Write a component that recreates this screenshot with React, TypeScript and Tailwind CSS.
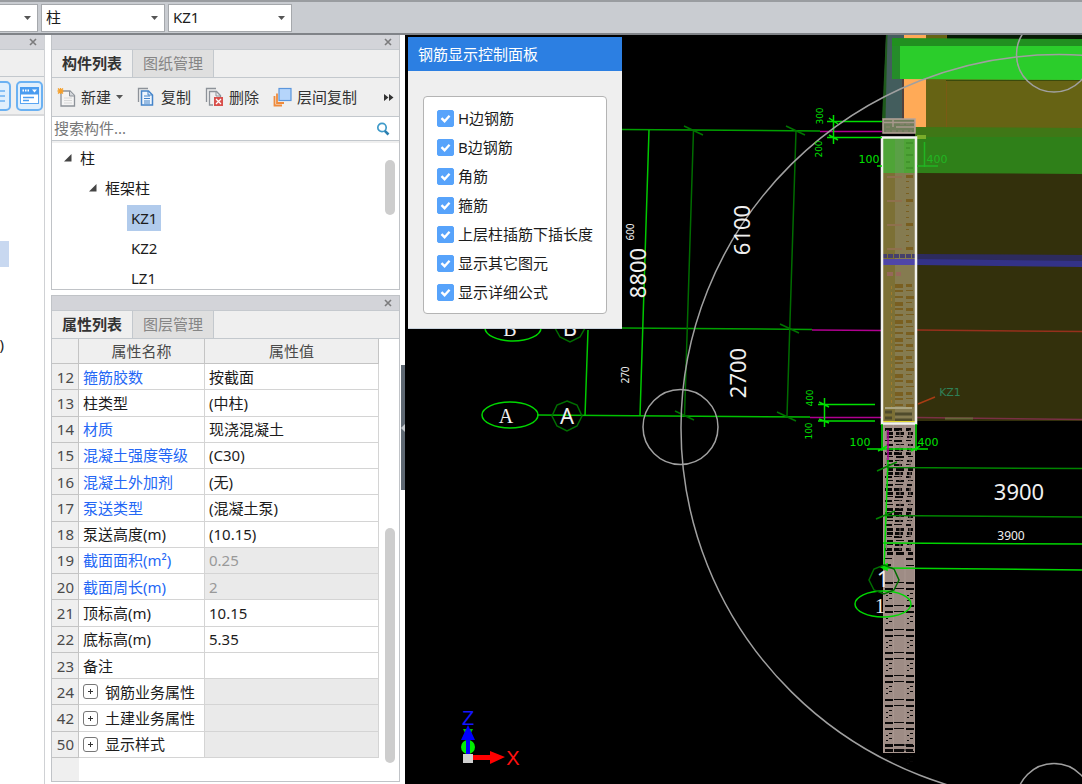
// src/App.tsx
import React, { useState } from "react";

type Property = {
  id: number;
  name: string;
  value?: string;
  link?: boolean;
  locked?: boolean;
  group?: boolean;
};

const properties: Property[] = [
  { id: 12, name: "箍筋胶数", value: "按截面", link: true },
  { id: 13, name: "柱类型", value: "(中柱)" },
  { id: 14, name: "材质", value: "现浇混凝土", link: true },
  { id: 15, name: "混凝土强度等级", value: "(C30)", link: true },
  { id: 16, name: "混凝土外加剂", value: "(无)", link: true },
  { id: 17, name: "泵送类型", value: "(混凝土泵)", link: true },
  { id: 18, name: "泵送高度(m)", value: "(10.15)" },
  { id: 19, name: "截面面积(m²)", value: "0.25", link: true, locked: true },
  { id: 20, name: "截面周长(m)", value: "2", link: true, locked: true },
  { id: 21, name: "顶标高(m)", value: "10.15" },
  { id: 22, name: "底标高(m)", value: "5.35" },
  { id: 23, name: "备注" },
  { id: 24, name: "钢筋业务属性", group: true, locked: true },
  { id: 42, name: "土建业务属性", group: true, locked: true },
  { id: 50, name: "显示样式", group: true, locked: true },
];

const displayOptions = [
  "H边钢筋",
  "B边钢筋",
  "角筋",
  "箍筋",
  "上层柱插筋下插长度",
  "显示其它图元",
  "显示详细公式",
];

const Caret: React.FC = () => (
  <svg width="7" height="4" viewBox="0 0 7 4" className="pointer-events-none shrink-0">
    <path d="M0 0h7L3.500 4z" fill="#555" />
  </svg>
);

const Combo: React.FC<{ label: string; options: string[]; className: string }> = ({
  label,
  options,
  className,
}) => (
  <div className={`grid h-[28px] items-center border border-[#a5a8ac] bg-white ${className}`}>
    <select
      aria-label={label}
      className="col-start-1 row-start-1 h-full w-full appearance-none bg-transparent pl-1 text-[15px] text-[#1c1c1c] outline-none"
    >
      {options.map((o) => (
        <option key={o}>{o}</option>
      ))}
    </select>
    <span className="pointer-events-none col-start-1 row-start-1 justify-self-end pr-[6px]">
      <Caret />
    </span>
  </div>
);

const TitleBar: React.FC = () => (
  <div className="flex h-[15px] shrink-0 items-center justify-end border-b border-[#c5c9ce] bg-[#d3d4d9] pr-[7px]">
    <button aria-label="关闭" className="block">
      <svg width="8" height="8" viewBox="0 0 8 8" className="block">
        <path d="M1 1l6 6M7 1L1 7" stroke="#7b7b7d" strokeWidth="1.600" />
      </svg>
    </button>
  </div>
);

const TabBar: React.FC<{ tabs: string[] }> = ({ tabs }) => (
  <div role="tablist" className="flex h-[28px] shrink-0 border-b border-[#c3c8cd] bg-[#efefef]">
    {tabs.map((tab, i) => (
      <button
        key={tab}
        role="tab"
        aria-selected={i === 0}
        className={
          i === 0
            ? "w-[81px] border-r border-[#c3c8cd] text-[15px] font-bold text-[#333]"
            : "w-[81px] border-r border-[#c3c8cd] bg-[#dfdfdf] text-[15px] text-[#858585]"
        }
      >
        {tab}
      </button>
    ))}
  </div>
);

const NewIcon: React.FC = () => (
  <svg width="19" height="20" viewBox="0 0 19 20">
    <path d="M4 4h9l4.500 4.500V19H4z" fill="#f4f4f4" stroke="#8d9299" strokeWidth="1.300" />
    <path d="M12.500 4v5h5" fill="#d5d8dc" stroke="#8d9299" />
    <path d="M7 11h8M7 13.500h8M7 16h8" stroke="#d8d8d8" />
    <path d="M3.500 1v6M.5 4h6M1 1.500l5 5M6 1.500l-5 5" stroke="#f5a02c" strokeWidth="1.300" />
  </svg>
);

const CopyIcon: React.FC = () => (
  <svg width="19" height="20" viewBox="0 0 19 20" fill="none">
    <path d="M1.500 15V1.500H11" stroke="#8d9299" strokeWidth="1.300" />
    <path d="M4.500 4h7l4 4v10h-11z" fill="#eef5fd" stroke="#4484c9" strokeWidth="1.500" />
    <path d="M7 9h6M7 11.500h6M7 14h6M7 16h6M11 4v4h4" stroke="#4484c9" />
  </svg>
);

const DeleteIcon: React.FC = () => (
  <svg width="19" height="20" viewBox="0 0 19 20" fill="none">
    <path d="M1.500 15V1.500H11" stroke="#8d9299" strokeWidth="1.300" />
    <path d="M8 18H4.500V4.500h7l4 4V10" stroke="#8d9299" strokeWidth="1.300" />
    <path d="M11 4.500V9h4.500" stroke="#8d9299" />
    <rect x="9" y="10" width="9" height="9" fill="#d8504c" />
    <path d="M11 12l5 5M16 12l-5 5" stroke="#fff" strokeWidth="1.300" />
  </svg>
);

const LayerIcon: React.FC = () => (
  <svg width="19" height="20" viewBox="0 0 19 20" fill="none">
    <path d="M1.500 9v9.500H9M4 6.500V16h7" stroke="#ef8b3c" strokeWidth="1.800" />
    <rect x="6" y="1.500" width="12" height="12" fill="#b5d5fb" stroke="#5b96dc" strokeWidth="1.200" />
  </svg>
);

const ToolButton: React.FC<{ icon: React.ReactNode; text: string; menu?: boolean }> = ({
  icon,
  text,
  menu,
}) => (
  <button className="flex items-center gap-[5px] text-[15px] text-[#333]">
    {icon}
    {text}
    {menu && <Caret />}
  </button>
);

const TreeArrow: React.FC = () => (
  <svg width="8" height="8" viewBox="0 0 8 8" className="shrink-0">
    <path d="M7.500 0v7.500H0z" fill="#444" />
  </svg>
);

const NavigatorPane: React.FC = () => (
  <aside className="flex w-[45px] shrink-0 flex-col overflow-hidden border-r border-[#cfd1d4] bg-white">
    <TitleBar />
    <div className="h-[27px] shrink-0 border-b border-[#c3c8cd] bg-[#efefef]" />
    <div className="flex h-[39px] shrink-0 items-center justify-end gap-[5px] border-b-2 border-[#d9dadc] bg-[#efefef] pr-px">
      <button
        aria-label="列表"
        className="flex h-[30px] w-[27px] shrink-0 items-center justify-end rounded-[5px] border-2 border-[#6bb1f2] bg-[#e1effc] pr-1"
      >
        <svg width="14" height="14" viewBox="0 0 14 14">
          <path d="M0 2h14M0 7h14M0 12h14" stroke="#6bb1f2" strokeWidth="1.500" />
        </svg>
      </button>
      <button
        aria-label="详情"
        className="flex h-[30px] w-[27px] shrink-0 items-center justify-center rounded-[5px] border-2 border-[#6bb1f2] bg-[#e1effc]"
      >
        <svg width="19" height="17" viewBox="0 0 19 17">
          <rect x=".5" y=".5" width="18" height="16" fill="#fff" stroke="#5aa5f2" />
          <path d="M0 0h19v7.500H0z" fill="#4a9cf0" />
          <path d="M3 10.500h11M3 13.500h6" stroke="#4a9cf0" strokeWidth="1.500" />
          <path d="M2.500 3.500H4M5 3.500h1.500M7.500 3.500H9" stroke="#fff" strokeWidth="2" />
          <path d="M12 2.500h5l-2.500 3z" fill="#fff" />
        </svg>
      </button>
    </div>
    <div className="flex grow flex-col pt-[125px] text-[15px] text-[#1c1c1c]">
      <div className="h-[26px] w-[9px] bg-[#c8d8f0]" />
      <div className="flex w-1 justify-end pt-[66px]">)</div>
    </div>
  </aside>
);

const ComponentPanel: React.FC = () => (
  <section className="flex h-[255px] shrink-0 flex-col border-x border-b border-[#c0c3c7] bg-white">
    <TitleBar />
    <TabBar tabs={["构件列表", "图纸管理"]} />
    <div className="flex h-[39px] shrink-0 items-center gap-[14px] border-b border-[#c3c8cd] bg-[#efefef] px-[5px]">
      <ToolButton icon={<NewIcon />} text="新建" menu />
      <ToolButton icon={<CopyIcon />} text="复制" />
      <ToolButton icon={<DeleteIcon />} text="删除" />
      <ToolButton icon={<LayerIcon />} text="层间复制" />
      <button aria-label="更多" className="ml-auto">
        <svg width="10" height="7" viewBox="0 0 10 7">
          <path d="M0 0l4.500 3.500L0 7zM5 0l4.500 3.500L5 7z" fill="#333" />
        </svg>
      </button>
    </div>
    <div className="flex h-[24px] shrink-0 items-center border-b border-[#c3c8cd] pr-[9px]">
      <input
        type="text"
        aria-label="搜索构件"
        placeholder="搜索构件..."
        className="min-w-0 flex-1 pl-[2px] text-[15px] outline-none placeholder:text-[#777]"
      />
      <svg width="14" height="14" viewBox="0 0 14 14" fill="none">
        <circle cx="6" cy="5.500" r="4.200" stroke="#3f9ac9" strokeWidth="1.700" />
        <path d="M8.800 8.800l3.700 3.700" stroke="#2c7fb0" strokeWidth="2.600" />
      </svg>
    </div>
    <div className="flex min-h-0 grow border-t-2 border-[#efefef]">
      <ul role="tree" className="grow overflow-hidden text-[15px] text-[#1c1c1c]">
        <li role="treeitem" className="flex h-[30px] items-center gap-2 pl-3">
          <TreeArrow />
          柱
        </li>
        <li role="treeitem" className="flex h-[30px] items-center gap-2 pl-[37px]">
          <TreeArrow />
          框架柱
        </li>
        <li role="treeitem" aria-selected="true" className="flex h-[30px] items-center pl-[75px]">
          <span className="h-[26px] bg-[#b1cbec] px-1 leading-[26px]">KZ1</span>
        </li>
        <li role="treeitem" className="flex h-[30px] items-center pl-[79px]">
          KZ2
        </li>
        <li role="treeitem" className="flex h-[30px] items-center pl-[79px]">
          LZ1
        </li>
      </ul>
      <div className="shrink-0 pr-1 pt-[17px]">
        <div className="h-[55px] w-[10px] rounded-full bg-[#cdcdcd]" />
      </div>
    </div>
  </section>
);

const PropertyPanel: React.FC = () => (
  <section className="flex grow flex-col border border-[#c0c3c7] bg-white">
    <TitleBar />
    <TabBar tabs={["属性列表", "图层管理"]} />
    <div className="flex grow justify-between">
      <div className="flex flex-col">
        <table className="h-[419px] w-[327px] table-fixed border-separate border-spacing-0 text-[15px]">
          <thead>
            <tr className="bg-[#efefef] text-[#4a4a4a]">
              <th className="w-[27px] border-b border-r border-[#c4c4c4]" />
              <th className="w-[126px] border-b border-r border-[#c4c4c4] font-normal leading-6">属性名称</th>
              <th className="border-b border-r border-[#c4c4c4] font-normal leading-6">属性值</th>
            </tr>
          </thead>
          <tbody>
            {properties.map((p) => (
              <tr key={p.id}>
                <td className="border-b border-r border-[#c4c4c4] bg-[#efefef] pr-1 text-right leading-6 text-[#4a4a4a]">
                  {p.id}
                </td>
                <td className="border-b border-r border-[#d4d4d4] pl-1 leading-6">
                  <div className={p.link ? "flex items-center text-[#2467f5]" : "flex items-center text-[#1c1c1c]"}>
                    {p.group && (
                      <button
                        aria-label={`展开${p.name}`}
                        className="mr-[7px] flex h-[15px] w-[15px] shrink-0 items-center justify-center rounded-[3px] border border-[#777] bg-white"
                      >
                        <svg width="5" height="5" viewBox="0 0 5 5">
                          <path d="M0 2.500h5M2.500 0v5" stroke="#333" />
                        </svg>
                      </button>
                    )}
                    {p.name}
                  </div>
                </td>
                <td
                  className={
                    p.locked
                      ? "border-b border-r border-[#d4d4d4] bg-[#eaeaea] pl-1 leading-6 text-[#999]"
                      : "border-b border-r border-[#d4d4d4] pl-1 leading-6 text-[#1c1c1c]"
                  }
                >
                  {p.value}
                </td>
              </tr>
            ))}
          </tbody>
        </table>
        <div className="w-[27px] grow bg-[#efefef]" />
      </div>
      <div className="shrink-0 pr-1 pt-[189px]">
        <div className="h-[235px] w-[10px] rounded-full bg-[#cdcdcd]" />
      </div>
    </div>
  </section>
);

const RebarDialog: React.FC = () => {
  const [checked, setChecked] = useState<boolean[]>(displayOptions.map(() => true));

  const toggle = (index: number) => {
    setChecked(checked.map((c, i) => (i === index ? !c : c)));
  };

  return (
    <div role="dialog" aria-labelledby="rebar-title" className="absolute left-[3px] top-[2px] w-[214px] border-b border-[#c9d3dc] bg-[#efefef]">
      <h2 id="rebar-title" className="h-[34px] bg-[#2c7fe2] pl-[10px] text-[15px] leading-[34px] text-white">
        钢筋显示控制面板
      </h2>
      <div className="px-[15px] pb-[14px] pt-[25px]">
        <div className="flex flex-col gap-[5px] rounded-[4px] border border-[#b4b4b4] bg-white px-[13px] py-[9px]">
          {displayOptions.map((name, i) => (
            <label key={name} className="flex h-6 items-center gap-1 whitespace-nowrap text-[15px] text-[#1c1c1c]">
              <span className="grid place-items-center">
                <input
                  type="checkbox"
                  checked={checked[i]}
                  onChange={() => toggle(i)}
                  className="col-start-1 row-start-1 h-[17px] w-[17px] appearance-none rounded-[2px] border border-[#57a3fb] bg-white checked:bg-[#57a3fb]"
                />
                <svg width="11" height="9" viewBox="0 0 12 10" className="pointer-events-none col-start-1 row-start-1">
                  <path d="M1.500 4.500L5 8l5.500-6" fill="none" stroke="#fff" strokeWidth="2.600" />
                </svg>
              </span>
              {name}
            </label>
          ))}
        </div>
      </div>
    </div>
  );
};

// x, width of the three rebar cages inside the column
const cages = [
  [885, 8],
  [894, 10],
  [906, 8],
];

const denseRows = Array.from({ length: 32 }, (_, i) => 428 + i * 4);
const tieRows = Array.from({ length: 8 }, (_, i) => Math.round(582 + i * 23.3));
const brownRows = Array.from({ length: 21 }, (_, i) => 284 + i * 6);

const LowerColumn: React.FC = () => (
  <g>
    <rect x="883" y="424" width="32" height="329" fill="#9e8c85" />
    <g fill="#0a0808">
      {denseRows.map((y, i) =>
        cages.map(([x, w], k) => (
          <rect
            key={`${y}-${x}`}
            x={x + ((i * 5 + k * 3) % 3)}
            y={y}
            width={w - 1 - ((i * 3 + k) % 3)}
            height={i % 5 < 2 ? 3 : (i + k) % 2 === 0 ? 2 : 1}
          />
        ))
      )}
      {tieRows.map((y) =>
        cages.map(([x, w], k) => (
          <g key={`${y}-${x}`}>
            <rect x={x} y={y} width={w} height={k === 1 ? 1 : 2} />
            <rect x={x} y={y + 6} width={w} height={k === 1 ? 1 : 2} />
            {k !== 1 && (
              <>
                <rect x={x + 4} y={y + 11} width="3" height="1" />
                <rect x={x + 1} y={y + 13} width="2" height="1" />
                <rect x={x + 4} y={y + 16} width="3" height="1" />
                <rect x={x + 1} y={y + 18} width="2" height="1" />
              </>
            )}
          </g>
        ))
      )}
      <rect x="885" y="558" width="7" height="1" />
      <rect x="906" y="558" width="7" height="2" />
      <rect x="885" y="564" width="6" height="2" />
      <rect x="906" y="565" width="8" height="1" />
      <rect x="885" y="744" width="28" height="2" />
      <rect x="885" y="749" width="28" height="2" />
    </g>
    <path d="M883.500 424v329M893.500 424v329M905 424v329M914.500 424v329M883 752.500h32" stroke="#a8968f" />
    <path d="M886.500 430v120M900 430v120M910 430v120" stroke="#8a7973" strokeDasharray="9 5" />
  </g>
);

const UpperColumn: React.FC = () => (
  <g>
    <rect x="882" y="137" width="35" height="287" fill="#7c7035" />
    <rect x="895" y="173" width="20" height="250" fill="#857b50" />
    <rect x="882" y="137" width="35" height="36" fill="#4fa437" />
    <rect x="895" y="137" width="9" height="36" fill="#5aa046" />
    <g fill="#7a5f20">
      {brownRows.map((y, i) => (
        <g key={y}>
          <rect x="895" y={y} width="8" height={i % 3 === 0 ? 4 : 2} />
          <rect x="906" y={y} width={6 + (i % 3)} height={i % 2 === 0 ? 3 : 1} />
          <rect x="891" y={y + 2} width="1" height="3" fill="#a07a2c" />
        </g>
      ))}
      {Array.from({ length: 13 }, (_, i) => (
        <g key={i}>
          <rect x="906" y={175 + i * 6} width={i % 4 === 0 ? 7 : 3} height={i % 4 === 0 ? 3 : 1} />
          {i % 4 === 0 && <rect x="887" y={176 + i * 6} width="15" height="2" fill="#8f704e" />}
        </g>
      ))}
    </g>
    <path d="M906 143h7M906 148h4M906 155h7M906 162h4M906 168h7" stroke="#3f8f2a" strokeWidth="1.500" />
    <path d="M882 256h33" stroke="#45406b" strokeWidth="4" strokeDasharray="5 1" />
    <rect x="882" y="259" width="35" height="6" fill="#4f46a8" />
    <path d="M887 274h6M896 274h5" stroke="#96685a" strokeWidth="4" />
    <rect x="885" y="407" width="27" height="2" fill="#aaa582" />
    <path d="M885 412h7M895 414h17M885 418h7M895 420h17" stroke="#4f4b2c" strokeWidth="3" />
    <path d="M882 421.500h35" stroke="#e4d92c" />
    <rect x="882" y="137.500" width="34" height="286" stroke="#f2f2ee" strokeWidth="2.500" />
    <path d="M883 119h32v14h-32z" fill="#6f7d5b" stroke="#b8a49a" strokeWidth="1.500" />
    <path d="M883 122.500h32M896 127h18M893 119v8" stroke="#a8988c" strokeWidth="1.500" />
    <path d="M886 127h6M900 124h12M886 131h26" stroke="#8f8272" strokeDasharray="4 2" />
  </g>
);

const Viewport: React.FC = () => (
  <svg
    viewBox="405 35 677 749"
    preserveAspectRatio="xMinYMin slice"
    className="block h-full w-full font-['Noto_Sans','Noto_Sans_CJK_SC',sans-serif]"
    fill="none"
  >
    {/* floor slabs and beams */}
    <rect x="925" y="35" width="157" height="95" fill="#666314" />
    <rect x="946" y="35" width="136" height="4" fill="#071a05" />
    <rect x="917" y="173" width="165" height="248" fill="#33300c" />
    <path d="M886 35h18v84h-21z" fill="#435d5d" />
    <path d="M886 35h1.500l-2 84H882z" fill="#1f5a1c" />
    <path d="M902 78h2v50h-2z" fill="#52403c" />
    <rect x="904" y="35" width="22" height="94" fill="#ffaa57" />
    <path d="M946.500 35v93" stroke="#7a5a14" />
    <path d="M892 38l190 1v8H892z" fill="#219020" />
    <path d="M892 46h10v33h-10z" fill="#258c2a" />
    <path d="M900 46h182v34l-182-1z" fill="#2bcd2b" />
    <path d="M946 80h136v1h-136z" fill="#3a4a0c" />
    <path d="M915 127l167 1v10H915z" fill="#3f7716" />
    <path d="M915 137h167v37l-165-1z" fill="#2f8019" />
    <rect x="917" y="135" width="9" height="4" fill="#7aac2a" />
    <path d="M917 254l165 1v6H917z" fill="#2d2b5e" />
    <path d="M917 259l165 2v6l-165-2z" fill="#333288" />

    {/* axis grid */}
    <g stroke="#00a000" strokeWidth="1.500">
      <path d="M622 129.500L820 131M622 328L812 329.500" />
      <path d="M537 415L810 417" stroke="#00c000" />
      <path d="M649 130L640 416M588 330L585 416" stroke="#00c800" />
      <path d="M693.500 130L684.500 416M796 131L787 416" stroke="#006c00" />
      <path d="M684 126l19 9M786 126l19 9M780 324l19 9M675 411l19 9M777 412l19 9" stroke="#007400" />
    </g>
    <path d="M820 131.500H882M812 330L882 330.500M810 417.500H882" stroke="#b00090" strokeWidth="1.500" />
    <path d="M917 330L1082 331.500" stroke="#96301c" strokeWidth="1.500" />
    <path d="M917 417.500L1082 419.500" stroke="#7a3045" strokeWidth="1.500" />
    <path d="M945 418.500h28" stroke="#66663a" strokeWidth="2" />

    <LowerColumn />
    <UpperColumn />

    {/* offsets beside the column */}
    <g stroke="#00e000" strokeWidth="1.500">
      <path d="M827 121.500h55M827 137.500h55M833.500 115v29M829 118l9 6M829 135l9 5" />
      <path d="M818 404.500h57M818 421h57M824.500 398v29M819 402l10 5M819 419l10 4" />
      <path d="M867 449h61M882 424v27M916 424v27M878 451l9-5M911 451l9-5" />
      <path d="M888 460L884 570M877 166h5" />
      <path d="M917 166h21M924.500 142v25" stroke="#22b422" />
      <path d="M883 543L1082 544M883 568L1082 570" stroke="#00d400" />
      <path d="M887 467.500L1082 468.500M885 515.500L1082 517M877 471l20-9M876 519l19-8" stroke="#008400" />
      <path d="M881 567l6-3v6z" fill="#00e000" />
    </g>
    <path d="M888 430v30" stroke="#b5009a" strokeWidth="1.500" />
    <path d="M918 404l17-7" stroke="#a83c14" strokeWidth="1.500" />

    {/* axis bubbles */}
    <g stroke="#00d800" strokeWidth="1.500">
      <ellipse cx="513" cy="328" rx="28" ry="13" />
      <ellipse cx="510" cy="415" rx="28" ry="13" />
      <ellipse cx="883" cy="604" rx="28" ry="13" />
      <path
        d="M567 401l10 4 5 11-5 10-10 5-10-5-5-10 5-11zM570 313l10 4 5 11-5 9-10 5-10-5-5-9 5-11zM884 565l10 4 5 11-5 10-10 4-10-4-5-10 5-11z"
        stroke="#006e00"
      />
    </g>

    <g stroke="#a0a0a0" strokeWidth="1.500">
      <ellipse cx="1059" cy="428" rx="378" ry="373.500" />
      <circle cx="680.500" cy="427" r="37.500" />
      <circle cx="1054" cy="54.500" r="37.500" />
      <circle cx="1054" cy="801" r="37.500" />
    </g>

    <g fill="#f0f0f0" textAnchor="middle" fontSize="22">
      <text transform="translate(750 230) rotate(-90)">6100</text>
      <text transform="translate(646 273) rotate(-90)">8800</text>
      <text transform="translate(746 373) rotate(-90)">2700</text>
      <text x="1019" y="500">3900</text>
      <text x="1011" y="540" fontSize="12">3900</text>
      <text x="567" y="424">A</text>
      <text x="570" y="336">B</text>
      <text x="883" y="587">1</text>
      <g className="font-['Liberation_Serif',serif]" fontSize="20">
        <text x="506" y="423">A</text>
        <text x="510" y="336">B</text>
        <text x="880" y="613">1</text>
      </g>
      <g fontSize="10">
        <text transform="translate(634 232) rotate(-90)">600</text>
        <text transform="translate(629 375) rotate(-90)">270</text>
      </g>
    </g>
    <g fill="#00e000" textAnchor="middle" fontSize="11" className="font-['DejaVu_Sans',sans-serif]">
      <text x="869" y="163">100</text>
      <text x="937" y="163" fill="#22b422">400</text>
      <text x="860" y="446">100</text>
      <text x="928" y="446">400</text>
      <text x="950" y="396" fill="#2f8058">KZ1</text>
      <g fontSize="9">
        <text transform="translate(823 116) rotate(-90)">300</text>
        <text transform="translate(822 149) rotate(-90)">200</text>
        <text transform="translate(813 398) rotate(-90)">400</text>
        <text transform="translate(812 431) rotate(-90)">100</text>
      </g>
    </g>

    {/* orientation gizmo */}
    <circle cx="468" cy="747" r="7" fill="#00f000" />
    <path d="M463 729h10l-2 4h-6z" fill="#00c000" />
    <path d="M466 754v-14h-5l7-15 7 15h-5v14z" fill="#0000ff" />
    <path d="M472 755h18v-4l15 6-15 7v-4h-18z" fill="#ff0000" />
    <rect x="463" y="754" width="10" height="9" fill="#d0d0d0" />
    <g textAnchor="middle" fontSize="20" className="font-['Liberation_Sans',sans-serif]">
      <text x="468" y="725" fill="#1414ff">Z</text>
      <text x="513" y="765" fill="#ff1010">X</text>
    </g>
  </svg>
);

const App: React.FC = () => {
  return (
    <div className="flex min-h-screen flex-col bg-white font-['Noto_Sans','Noto_Sans_CJK_SC',sans-serif] leading-normal">
      <header className="flex h-[35px] shrink-0 items-center gap-[3px] border-b-2 border-t-2 border-b-[#808388] border-t-[#999ca0] bg-[#c9ccd1]">
        <Combo label="楼层" options={[""]} className="w-[38px] border-l-0" />
        <Combo label="构件类型" options={["柱"]} className="w-[124px]" />
        <Combo label="构件" options={["KZ1"]} className="w-[124px]" />
      </header>
      <main className="flex grow">
        <NavigatorPane />
        <div className="ml-[6px] flex w-[349px] shrink-0 flex-col gap-[5px] pb-[2px]">
          <ComponentPanel />
          <PropertyPanel />
        </div>
        <div className="w-[5px] shrink-0 pl-px pt-[330px]">
          <button aria-label="折叠面板" className="flex h-[125px] w-full items-center bg-[#5f6973]">
            <svg width="4" height="8" viewBox="0 0 4 8">
              <path d="M4 0v8L0 4z" fill="#c5c9cd" />
            </svg>
          </button>
        </div>
        <div className="relative min-w-0 flex-1 bg-black">
          <Viewport />
          <RebarDialog />
        </div>
      </main>
    </div>
  );
};

export default App;
